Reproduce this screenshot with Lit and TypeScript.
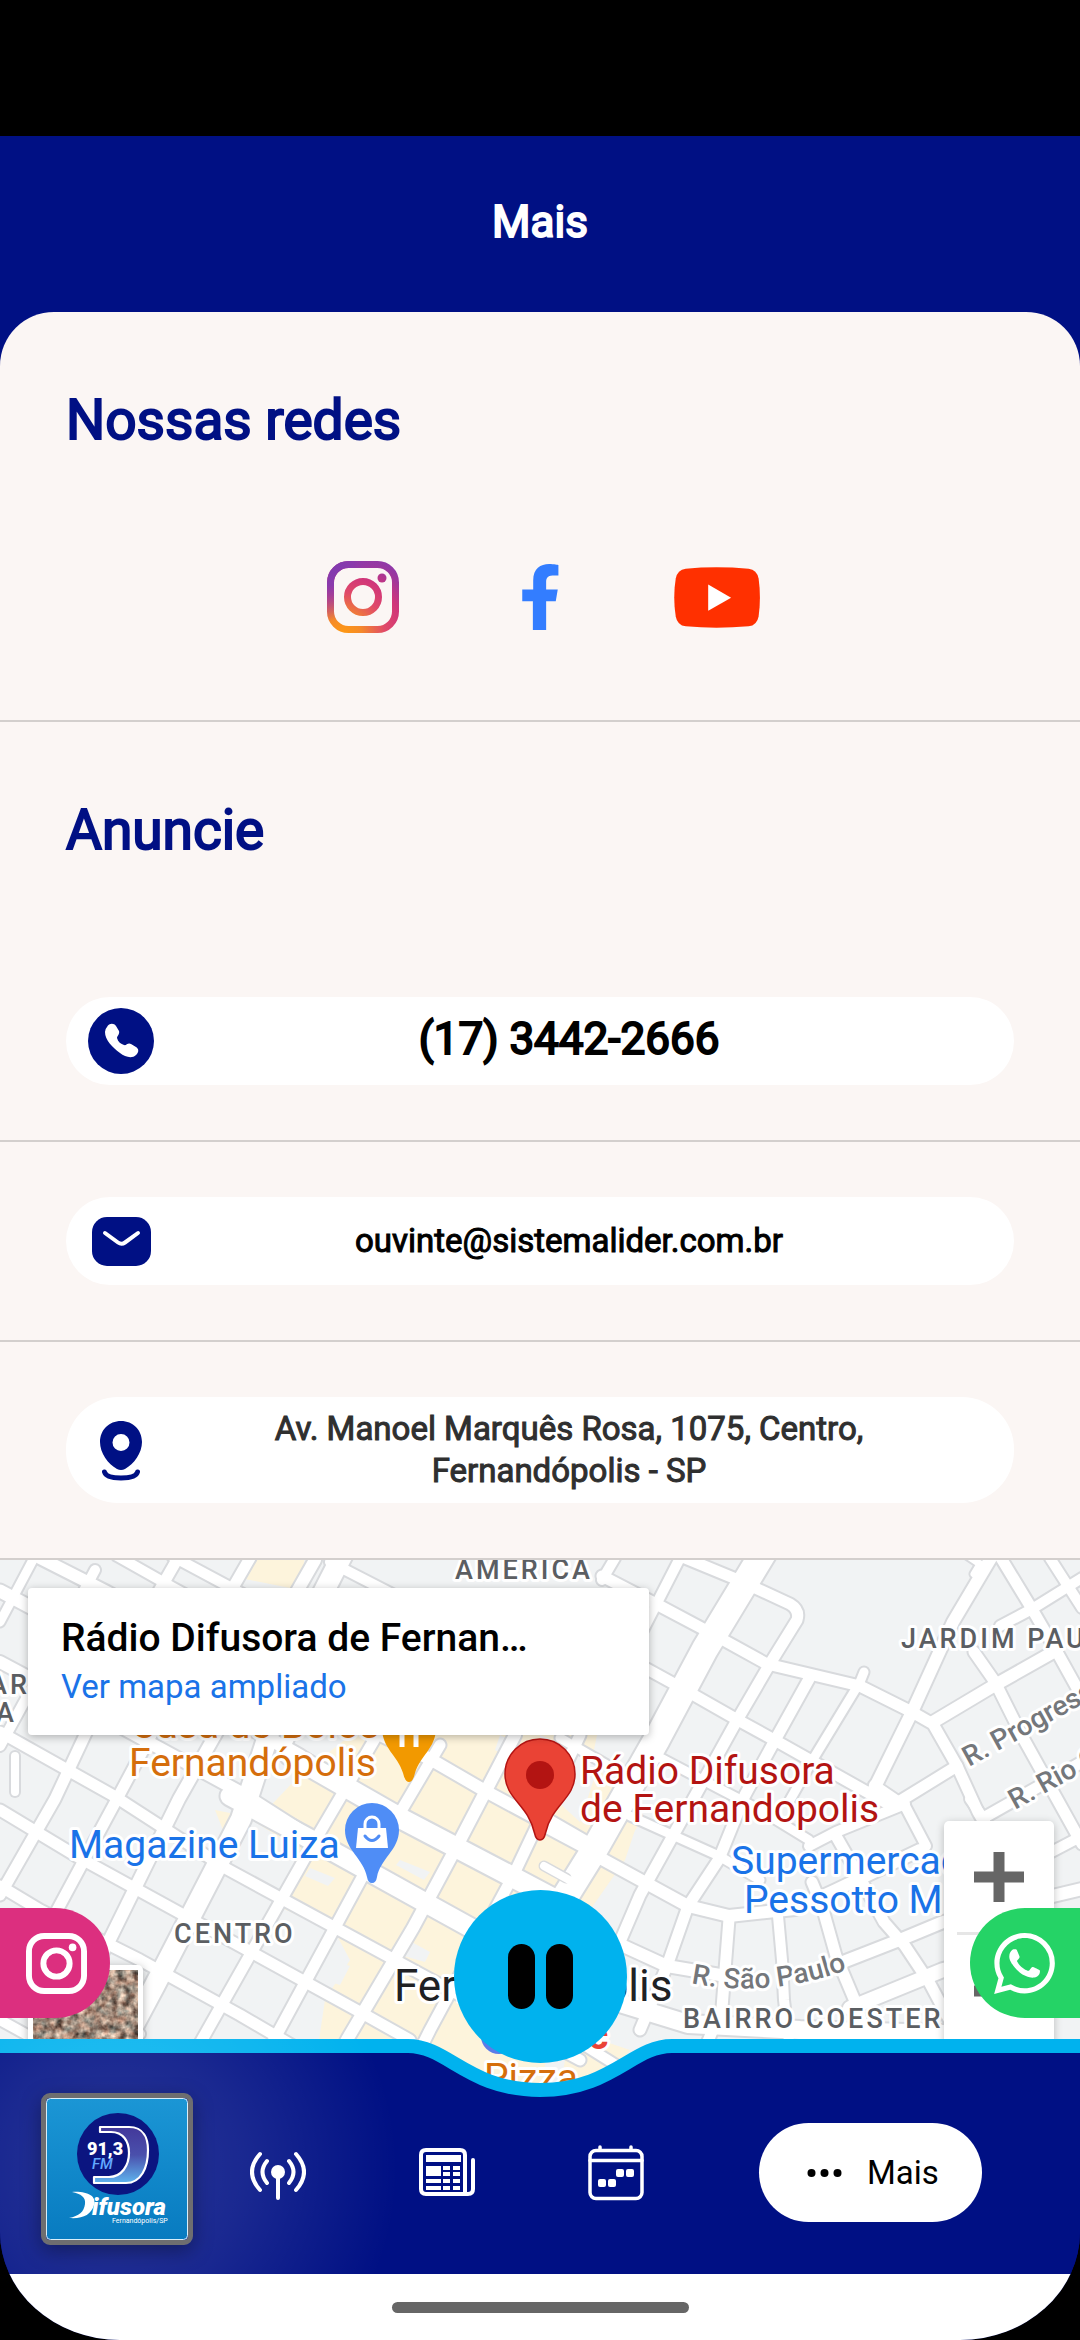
import { LitElement, html, svg, css, nothing } from "lit";
import { customElement } from "lit/decorators.js";

const WHATSAPP =
  "M17.472 14.382c-.297-.149-1.758-.867-2.03-.967-.273-.099-.471-.148-.67.15-.197.297-.767.966-.94 1.164-.173.199-.347.223-.644.075-.297-.15-1.255-.463-2.39-1.475-.883-.788-1.48-1.761-1.653-2.059-.173-.297-.018-.458.13-.606.134-.133.298-.347.446-.52.149-.174.198-.298.298-.497.099-.198.05-.371-.025-.52-.075-.149-.669-1.612-.916-2.207-.242-.579-.487-.5-.669-.51-.173-.008-.371-.01-.57-.01-.198 0-.52.074-.792.372-.272.297-1.04 1.016-1.04 2.479 0 1.462 1.065 2.875 1.213 3.074.149.198 2.096 3.2 5.077 4.487.709.306 1.262.489 1.694.625.712.227 1.36.195 1.871.118.571-.085 1.758-.719 2.006-1.413.248-.694.248-1.289.173-1.413-.074-.124-.272-.198-.57-.347m-5.421 7.403h-.004a9.87 9.87 0 01-5.031-1.378l-.361-.214-3.741.982.998-3.648-.235-.374a9.86 9.86 0 01-1.51-5.26c.001-5.45 4.436-9.884 9.888-9.884 2.64 0 5.122 1.03 6.988 2.898a9.825 9.825 0 012.893 6.994c-.003 5.45-4.437 9.884-9.885 9.884m8.413-18.297A11.815 11.815 0 0012.05 0C5.495 0 .16 5.335.157 11.892c0 2.096.547 4.142 1.588 5.945L.057 24l6.305-1.654a11.882 11.882 0 005.683 1.448h.005c6.554 0 11.89-5.335 11.893-11.893a11.821 11.821 0 00-3.48-8.413z";

/** Streets of the town centre: [path, width]. */
const STREETS: [string, number][] = [
  // north-west to south-east
  ["M117 -4L172 27L232 60L300 96", 10],
  ["M172 -4L241 33L320 76", 10],
  ["M330 2L400 38", 10],
  ["M40 -2L107 32L200 84L300 136L430 199L487 232L593 289", 12],
  ["M0 31L130 100L300 196L400 262", 13],
  ["M0 102L60 134L240 232L334 292", 12],
  ["M0 172L114 236L227 309L393 399L520 468L580 500", 11],
  ["M0 250L78 297L200 364L360 452L410 480", 11],
  ["M0 326L40 350L140 400L240 455L300 490", 11],
  ["M0 398L60 430L140 474", 10],
  ["M0 460L40 482", 10],
  ["M560 178L640 224", 9],
  ["M545 256L590 282", 8],
  ["M602 299L688 346L729 356L795 349L836 330L920 290", 12],
  ["M540 265L600 297", 9],
  ["M619 384L667 406L726 416", 12],
  ["M560 470L640 520", 10],
  // south-west to north-east
  ["M35 -4L0 62", 9],
  ["M95 10L45 104L0 186", 10],
  ["M178 -2L124 92L55 239L0 335", 11],
  ["M250 -2L190 102L117 239L40 382L0 450", 11],
  ["M315 0L235 140L179 239L110 379L50 490", 12],
  ["M360 40L310 136L281 195", 10],
  ["M380 170L310 289L203 478L180 520", 11],
  ["M440 185L365 312L275 478L250 520", 11],
  ["M515 175L457 286L413 368L348 478L325 520", 12],
  ["M580 175L513 316L430 470L400 530", 11],
  ["M681 -4L640 76", 10],
  ["M615 -2L602 20", 10],
  ["M685 -2L736 19L790 44Q800 50 797 60L771 102L736 162L695 236L640 335L619 384L590 440", 11],
  ["M809 119L774 182L745 235L719 299L688 346L667 406L640 470", 11],
  ["M864 112L860 122L815 196L790 240", 9],
  ["M991 -2L953 62L912 152L874 229", 12],
  ["M602 16L660 46L709 72L767 104L860 126L912 152L933 164L957 206L978 252L1000 290", 11],
  ["M647 109L678 126L736 159L778 182L874 236L892 246L957 206", 11],
  ["M874 225L905 246L926 286", 10],
  ["M809 286L836 272L905 244", 10],
  ["M630 256L719 296L760 320", 9],
  ["M655 195L760 250L809 280", 9],
  ["M1001 -2L1032 49L1057 92L1082 137", 11],
  ["M1050 -2L1082 48", 10],
  ["M1082 18L1032 49L1000 66", 10],
  ["M974 92L995 122L1022 176L1057 239L1082 284", 11],
  ["M933 162L995 125L1057 90", 12],
  ["M968 -4L980 4L974 14", 7],
  ["M985 257L1082 202", 11],
  ["M1082 276L1040 298", 10],
  ["M729 359L725 410L722 448L700 500", 11],
  ["M778 356L782 400L784 440L790 490", 10],
  ["M812 322L822 346L836 396L857 446L870 490", 11],
  ["M836 276L860 318L884 362L905 386L929 422L960 480", 11],
  ["M843 402L902 379L943 362L1082 329", 12],
  ["M970 239L984 259L1000 300", 10],
  ["M15 196V232", 8],
];

const AVENUES: [string, number][] = [
  ["M345 -10L300 78L241 259L155 425L115 500", 20],
  ["M765 -10L705 89L657 179L593 292L560 345", 26],
  ["M290 195L400 258L503 312L560 342", 20],
  ["M230 236L334 292L424 342L500 384", 19],
  ["M610 440L688 464L800 470L943 474", 18],
  ["M850 448L943 410L1082 378", 14],
];

interface Label {
  x: number;
  y: number;
  text: string;
  kind: string;
  turn?: number;
}

const LABELS: Label[] = [
  { x: 455, y: 19, text: "AMÉRICA", kind: "area" },
  { x: 901, y: 88, text: "JARDIM PAU", kind: "area" },
  { x: -11, y: 134, text: "AR", kind: "area" },
  { x: -4, y: 162, text: "A", kind: "area" },
  { x: 174, y: 383, text: "CENTRO", kind: "area" },
  { x: 683, y: 468, text: "BAIRRO COESTER", kind: "area" },
  { x: 969, y: 207, text: "R. Progress", kind: "street", turn: -29 },
  { x: 1015, y: 250, text: "R. Rio G", kind: "street", turn: -29 },
  { x: 131, y: 178, text: "Casa de Bolos", kind: "poi food" },
  { x: 129, y: 216, text: "Fernandópolis", kind: "poi food" },
  { x: 484, y: 531, text: "Pizza", kind: "poi food" },
  { x: 580, y: 224, text: "Rádio Difusora", kind: "poi place" },
  { x: 580, y: 262, text: "de Fernandopolis", kind: "poi place" },
  { x: 69, y: 298, text: "Magazine Luiza", kind: "poi shop" },
  { x: 731, y: 314, text: "Supermercad", kind: "poi shop" },
  { x: 744, y: 353, text: "Pessotto M", kind: "poi shop" },
  { x: 394, y: 441, text: "Fernandópolis", kind: "city" },
  { x: 588, y: 489, text: "c", kind: "poi station" },
];

@customElement("town-map")
export class TownMap extends LitElement {
  static styles = css`
    :host { display: block; position: relative; overflow: hidden; background: #f1f3f4; }
    .canvas { position: absolute; inset: 0; width: 100%; height: 100%; }
    .casing { fill: none; stroke: #d8dadd; stroke-linecap: round; stroke-linejoin: round; }
    .road { fill: none; stroke: #fff; stroke-linecap: round; stroke-linejoin: round; }
    text { font-family: Roboto, sans-serif; paint-order: stroke; stroke: #fff; stroke-width: 6px; stroke-linejoin: round; }
    .area { font-size: 27px; font-weight: 500; letter-spacing: 3px; fill: #5b5e62; }
    .street { font-size: 28px; font-weight: 500; fill: #74777b; }
    .poi { font-size: 39px; }
    .food { fill: #d56e0c; }
    .place { fill: #b31412; }
    .shop { fill: #1a73e8; }
    .city { font-size: 44px; fill: #202124; }
    .station { font-weight: 700; fill: #ea4335; }
    .card {
      position: absolute; left: 28px; top: 28px; width: 621px; box-sizing: border-box;
      padding: 26px 33px 24px; background: #fff; border-radius: 4px;
      box-shadow: 0 2px 8px rgba(0, 0, 0, 0.28);
    }
    .name { margin: 0; font-size: 39px; line-height: 48px; font-weight: 500; color: #000; }
    .larger { display: block; font-size: 33px; line-height: 49px; color: #1a73e8; text-decoration: none; }
    .zoom {
      position: absolute; right: 26px; top: 261px; width: 110px;
      display: flex; flex-direction: column; background: #fff; border-radius: 5px;
      box-shadow: 0 2px 8px rgba(0, 0, 0, 0.24);
    }
    .step { height: 111px; padding: 0; border: 0; background: none; display: grid; place-items: center; }
    .rule { height: 3px; margin: 0 13px; background: #e6e6e6; }
    .satellite {
      position: absolute; left: 28px; top: 405px; width: 115px; height: 115px; padding: 0;
      border: 5px solid #fff; border-radius: 5px; box-shadow: 0 2px 10px rgba(0, 0, 0, 0.3);
      box-sizing: border-box; background: #a39388; overflow: hidden;
    }
    .satellite svg { display: block; width: 100%; height: 100%; }
  `;

  render() {
    const roads = [...STREETS, ...AVENUES];
    return html`
      <svg class="canvas" viewBox="0 0 1080 530" preserveAspectRatio="xMidYMin slice" role="img" aria-label="Mapa de Fernandópolis">
        <defs><path id="saopaulo" d="M691 423Q770 439 852 408" /></defs>
        <path fill="#fdf4dc" d="M245 -4L305 -4L300 30L240 18ZM255 262L300 215L370 160H600L592 200L640 262L560 400L540 540H310L325 440L350 400L335 372L275 345L300 290ZM215 250L240 255L225 275Z" />
        <path fill="#fdf4dc" d="M590 290L640 255L625 300L590 350ZM570 470L630 490L600 530H560Z" />
        <path fill="#f1f3f4" d="M500 175L530 190L520 204L495 190ZM540 175L600 200L580 262L545 230ZM310 308L335 318L328 326L305 316ZM425 352L445 348L440 360ZM408 380L430 392L425 402L400 395ZM325 398L350 406L340 425L318 418ZM400 300L430 312L424 320L396 305Z" />
        ${roads.map(([d, w]) => svg`<path class="casing" d=${d} stroke-width=${w + 4}></path>`)}
        ${roads.map(([d, w]) => svg`<path class="road" d=${d} stroke-width=${w}></path>`)}
        <path class="casing" d="M544 306L566 318" stroke-width="11" />
        <path class="road" d="M544 306L580 326" stroke-width="8" />
        <circle cx="499" cy="476" r="18" fill="#5b7be8" />
        ${LABELS.map(
          (l) => svg`<text class=${l.kind} x=${l.x} y=${l.y} transform=${`rotate(${l.turn ?? 0} ${l.x} ${l.y})`}>${l.text}</text>`,
        )}
        <text class="street"><textPath href="#saopaulo">R. São Paulo</textPath></text>

        <path fill="#f29900" d="M409 222Q405 222 403 213C398 196 382 188 382 168A27 27 0 0 1 436 168C436 188 420 196 415 213Q413 222 409 222Z" />
        <path stroke="#fff" stroke-width="5" d="M402 165V187M416 165V187" />

        <path fill="#4f8df6" d="M372 323Q368 323 367 317C364 299 345 290 345 270A27 27 0 0 1 399 270C399 290 380 299 377 317Q376 323 372 323Z" />
        <path fill="#fff" d="M358 268H386L388 288H356Z" />
        <path fill="none" stroke="#fff" stroke-width="3" d="M365 269V264A7 7 0 0 1 379 264V269" />
        <path fill="none" stroke="#4f8df6" stroke-width="3" stroke-linecap="round" d="M365 276Q372 285 379 276" />

        <path fill="#ea4335" stroke="#b31412" stroke-width="1.5" d="M540 280Q536 280 534.500 273C528 244 505 239 505 214A35 35 0 0 1 575 214C575 239 552 244 545.500 273Q544 280 540 280Z" />
        <circle cx="540" cy="215" r="14" fill="#b31412" />
      </svg>

      <div class="card">
        <h3 class="name">Rádio Difusora de Fernan…</h3>
        <a class="larger" href="#mapa">Ver mapa ampliado</a>
      </div>

      <div class="zoom">
        <button class="step" aria-label="Aumentar o zoom">
          <svg width="50" height="50" viewBox="0 0 50 50"><path stroke="#666" stroke-width="11" d="M0 25H50M25 0V50" /></svg>
        </button>
        <div class="rule"></div>
        <button class="step" aria-label="Diminuir o zoom">
          <svg width="50" height="50" viewBox="0 0 50 50"><path stroke="#666" stroke-width="11" d="M0 25H50" /></svg>
        </button>
      </div>

      <button class="satellite" aria-label="Imagens de satélite">
        <svg viewBox="0 0 105 105">
          <filter id="ground" x="0" y="0" width="100%" height="100%" color-interpolation-filters="sRGB">
            <feTurbulence type="fractalNoise" baseFrequency="0.13" numOctaves="3" seed="5" />
            <feColorMatrix values="0.9 0.5 0 0 -0.07  0.7 0.65 0 0 -0.13  0.6 0.65 0 0 -0.14  0 0 0 0 1" />
          </filter>
          <rect width="105" height="105" filter="url(#ground)" />
        </svg>
      </button>
    `;
  }
}

@customElement("app-root")
export class AppRoot extends LitElement {
  static styles = css`
    :host { display: block; background: #000; font-family: Roboto, "Noto Sans", sans-serif; }
    * { box-sizing: border-box; }
    a { color: inherit; text-decoration: none; }
    button { font: inherit; color: inherit; border: 0; padding: 0; }
    svg { display: block; }

    .device { min-height: 100vh; display: flex; flex-direction: column; padding-top: 136px; }
    .screen {
      position: relative; flex: 1; display: flex; flex-direction: column; overflow: hidden;
      background: #001084; border-radius: 0 0 120px 120px / 0 0 108px 108px;
    }
    .header { height: 176px; padding-bottom: 4px; display: grid; place-items: center; }
    .strong { font-weight: 400; -webkit-text-stroke: 1px currentColor; }
    .wide { -webkit-text-stroke-width: 2px; }
    .title { margin: 0; font-size: 44px; line-height: 52px; color: #fff; }

    .content {
      flex: 1; display: flex; flex-direction: column; overflow: hidden;
      background: #fbf6f4; border-radius: 54px 54px 0 0;
    }
    .section { border-bottom: 2px solid #d3cfcd; padding: 76px 66px 55px; }
    .row { border-bottom: 2px solid #d3cfcd; padding: 55px 66px; }
    .heading { margin: 0; font-size: 55px; line-height: 64px; color: #001084; }
    .socials {
      display: grid; grid-template-columns: repeat(3, 177px); justify-content: center;
      padding: 109px 0 32px;
    }
    .social { height: 72px; display: grid; place-items: center; }

    .pill {
      display: grid; grid-template-columns: 66px 1fr; align-items: center; min-height: 88px;
      padding: 11px 30px 11px 22px; background: #fff; border-radius: 52px; color: #000;
      text-align: center;
    }
    .first { margin-top: 135px; }
    .glyph { display: grid; place-items: center; }
    .phone { font-size: 44px; line-height: 52px; padding-bottom: 4px; }
    .small { font-size: 33px; line-height: 42px; }
    .address { color: #2f2f2f; padding-inline: 60px; }

    .map { flex: 1; min-height: 400px; }

    .nav { position: relative; height: 235px; margin-top: -48px; color: #fff; }
    .shape {
      position: absolute; inset: 0; display: grid; grid-template-columns: 1fr 320px 1fr;
    }
    .side { background: #001084; border-top: 14px solid #00b2ee; }
    .glow {
      position: absolute; inset: 0;
      background: radial-gradient(circle 280px at 118px 130px, rgba(255, 255, 255, 0.16), rgba(255, 255, 255, 0.1) 45%, rgba(255, 255, 255, 0));
    }
    .tabs {
      position: relative; display: grid; grid-template-columns: 152px 1fr 1fr 1fr 281px;
      padding: 54px 98px 0 41px; height: 213px; align-items: center;
    }
    .brand {
      align-self: start; width: 152px; height: 152px; border: 5px solid #6e6e70;
      border-radius: 9px; overflow: hidden; box-shadow: 0 6px 20px rgba(0, 0, 0, 0.35);
    }
    .tab { display: grid; place-items: center; }
    .current {
      justify-self: end; display: flex; align-items: center; gap: 25px; width: 223px; height: 99px;
      padding-left: 48px; border-radius: 50px; background: #fff; color: #000; font-size: 33px; line-height: 40px;
    }

    .play {
      position: absolute; left: calc(50% - 86px); bottom: 277px; width: 173px; height: 173px;
      border-radius: 50%; background: #00b2ee; display: flex; justify-content: center; align-items: center; gap: 11px;
    }
    .bar { width: 27px; height: 65px; border-radius: 14px; background: #000; }
    .side-link { position: absolute; bottom: 322px; width: 110px; height: 110px; display: flex; align-items: center; }
    .insta { left: 0; border-radius: 0 55px 55px 0; background: #dc2f7f; padding-left: 26px; }
    .whats { right: 0; border-radius: 55px 0 0 55px; background: #25d366; padding-left: 24px; }

    .system { height: 66px; background: #fff; display: grid; place-items: center; }
    .gesture { width: 297px; height: 11px; border-radius: 6px; background: #666; }

    .logo-num { font: 900 18px Roboto, sans-serif; fill: #fff; }
    .logo-fm { font: italic 500 15px Roboto, sans-serif; fill: #62a8ff; }
    .logo-name { font: italic 900 24px Roboto, sans-serif; fill: #fff; }
    .logo-city { font: 400 7px Roboto, sans-serif; fill: #fff; }
  `;

  private instagram(size: number, color?: string) {
    const stroke = color ?? "url(#ig)";
    return html`<svg width=${size} height=${size} viewBox="0 0 72 72" fill="none" stroke=${stroke} stroke-width="7">
      <defs>
        <radialGradient id="ig" gradientUnits="userSpaceOnUse" cx="16" cy="74" r="84">
          <stop offset="0" stop-color="#ff9a10" /><stop offset="0.22" stop-color="#f58a2a" />
          <stop offset="0.5" stop-color="#e04a68" /><stop offset="0.72" stop-color="#d0357a" />
          <stop offset="0.9" stop-color="#a0379a" /><stop offset="1" stop-color="#8f38a8" />
        </radialGradient>
        <radialGradient id="ig-top" gradientUnits="userSpaceOnUse" cx="2" cy="0" r="60">
          <stop offset="0" stop-color="#7f3bb0" /><stop offset="0.4" stop-color="#8a3aac" />
          <stop offset="1" stop-color="#8f38a8" stop-opacity="0" />
        </radialGradient>
      </defs>
      <rect x="3.500" y="3.500" width="65" height="65" rx="18" />
      ${color ? nothing : svg`<rect x="3.500" y="3.500" width="65" height="65" rx="18" stroke="url(#ig-top)"></rect>`}
      <circle cx="36" cy="36" r="15.500" />
      <circle cx="55" cy="17" r="4.500" fill=${stroke} stroke="none" />
    </svg>`;
  }

  private logo() {
    return html`<svg width="142" height="142" viewBox="5 5 142 142">
      <defs>
        <linearGradient id="sky" x2="0" y2="1"><stop stop-color="#1b96d5" /><stop offset="1" stop-color="#087bc0" /></linearGradient>
        <linearGradient id="dee" x2="0" y2="1">
          <stop stop-color="#43389a" /><stop offset="0.5" stop-color="#4a50ac" /><stop offset="1" stop-color="#5fb4ee" />
        </linearGradient>
      </defs>
      <rect x="5.500" y="5.500" width="141" height="141" rx="4" fill="url(#sky)" stroke="#d8eefa" />
      <circle cx="77" cy="61" r="41" fill="#0b1580" />
      <path fill="url(#dee)" stroke="#fff" stroke-width="2.200" stroke-linejoin="round"
        d="M59 34H88C103 34 107 46 107 57C107 75 100 90 85 90H53V84H68C81 84 88 72 88 60C88 48 82 39 70 39H59Z" />
      <text class="logo-num" x="46" y="62">91,3</text>
      <text class="logo-fm" x="51" y="76">FM</text>
      <path fill="#fff" d="M31 99C46 98 56 103 53 112C50 122 42 126 28 125C38 123 43 119 44 111C45 104 40 101 31 99Z" />
      <text class="logo-name" x="51" y="122">ifusora</text>
      <text class="logo-city" x="71" y="130">Fernandópolis/SP</text>
    </svg>`;
  }

  render() {
    return html`
      <div class="device">
        <div class="screen">
          <header class="header"><h1 class="title strong wide">Mais</h1></header>

          <main class="content">
            <section class="section">
              <h2 class="heading strong wide">Nossas redes</h2>
              <div class="socials">
                <a class="social" href="#instagram" aria-label="Instagram">${this.instagram(72)}</a>
                <a class="social" href="#facebook" aria-label="Facebook">
                  <svg width="37" height="66" viewBox="667 101 110 199"><path fill="#337dff"
                    d="M667 178H700V150C700 115 722 101 748 101C762 101 776 104 776 104V136H758C743 136 739 146 739 155V178H774L768 213H739V300H699V213H667Z" /></svg>
                </a>
                <a class="social" href="#youtube" aria-label="YouTube">
                  <svg width="86" height="61" viewBox="1124 113 259 184">
                    <path fill="#ff3000" d="M1159 118Q1250 109 1349 118Q1374 121 1379 148Q1387 205 1379 262Q1374 289 1349 292Q1250 301 1159 292Q1134 289 1129 262Q1120 205 1129 148Q1134 121 1159 118Z" />
                    <path fill="#fff" d="M1227 166L1296 206L1227 245Z" />
                  </svg>
                </a>
              </div>
            </section>

            <section class="section">
              <h2 class="heading strong wide">Anuncie</h2>
              <a class="pill first" href="tel:+551734422666">
                <span class="glyph">
                  <svg width="66" height="66" viewBox="0 0 66 66">
                    <circle cx="33" cy="33" r="33" fill="#001084" />
                    <path fill="#fff" d="M19 19C21 15 26 15 28 18L31 23C32 26 29 28 29 30C30 34 33 36 36 37C38 38 40 34 43 36L48 39C51 41 51 44 48 47C44 51 37 49 32 45C24 39 17 32 17 24Q17 21 19 19Z" />
                  </svg>
                </span>
                <span class="phone strong wide">(17) 3442-2666</span>
              </a>
            </section>

            <div class="row">
              <a class="pill" href="mailto:ouvinte@sistemalider.com.br">
                <span class="glyph">
                  <svg width="59" height="49" viewBox="0 0 59 49">
                    <rect width="59" height="49" rx="15" fill="#001084" />
                    <path fill="none" stroke="#fff" stroke-width="4" stroke-linecap="round" d="M13 16L26 25.500Q29.500 28 33 25.500L46 16" />
                  </svg>
                </span>
                <span class="small strong">ouvinte@sistemalider.com.br</span>
              </a>
            </div>

            <div class="row">
              <a class="pill" href="#endereco">
                <span class="glyph">
                  <svg width="66" height="66" viewBox="0 0 66 66">
                    <path fill="#001084" fill-rule="evenodd" d="M33 4C45 4 54 13 54 25C54 36 46 47 37 52Q33 54 29 52C20 47 12 36 12 25C12 13 21 4 33 4ZM33 17A8.500 8.500 0 0 0 33 34A8.500 8.500 0 0 0 33 17Z" />
                    <path fill="none" stroke="#001084" stroke-width="5" stroke-linecap="round" d="M16.500 55Q18 61 33 61Q48 61 49.500 55" />
                  </svg>
                </span>
                <span class="small strong address">Av. Manoel Marquês Rosa, 1075, Centro, Fernandópolis - SP</span>
              </a>
            </div>

            <town-map class="map"></town-map>
          </main>

          <nav class="nav">
            <div class="shape">
              <div class="side"></div>
              <svg width="320" height="235" viewBox="0 0 320 235">
                <path fill="#001084" d="M0 7H28C68 7 88 51 160 51C232 51 252 7 292 7H320V235H0Z" />
                <path fill="none" stroke="#00b2ee" stroke-width="14" d="M0 7H28C68 7 88 51 160 51C232 51 252 7 292 7H320" />
              </svg>
              <div class="side"></div>
            </div>
            <div class="glow"></div>
            <div class="tabs">
              <a class="brand" href="#inicio" aria-label="Difusora 91,3 FM">${this.logo()}</a>
              <a class="tab" href="#ao-vivo" aria-label="Ao vivo">
                <svg width="56" height="56" viewBox="0 -7 56 56" fill="none" stroke="#fff" stroke-width="4" stroke-linecap="round">
                  <circle cx="28" cy="20" r="7" fill="#fff" stroke="none" />
                  <path d="M28 22V46M17 9Q8 20 17 31M39 9Q48 20 39 31M10 2Q-6 20 10 38M46 2Q62 20 46 38" />
                </svg>
              </a>
              <a class="tab" href="#noticias" aria-label="Notícias">
                <svg width="56" height="50" viewBox="0 0 56 50">
                  <path fill="none" stroke="#fff" stroke-width="4" stroke-linecap="round" d="M7 2H41Q46 2 46 7V46H7Q2 46 2 41V7Q2 2 7 2ZM54 12V41Q54 46 49 46H44" />
                  <path fill="#fff" d="M7 7H42V14H7ZM7 18H22V28H7ZM7 31H22V35H7ZM7 38H22V42H7ZM24 18H31V22H24ZM24 24H31V28H24ZM24 31H31V35H24ZM24 38H31V42H24ZM34 18H41V22H34ZM34 24H41V28H34ZM34 31H41V35H34ZM34 38H41V42H34Z" />
                </svg>
              </a>
              <a class="tab" href="#programacao" aria-label="Programação">
                <svg width="56" height="56" viewBox="0 0 56 56">
                  <rect x="2" y="5.500" width="52" height="48" rx="6" fill="none" stroke="#fff" stroke-width="3.500" />
                  <path stroke="#fff" stroke-width="3.500" stroke-linecap="round" d="M2 15.500H54M12 2V5M43 2V5" />
                  <g fill="#fff">
                    <rect x="10" y="34" width="8" height="8" rx="2" /><rect x="20" y="34" width="8" height="8" rx="2" />
                    <rect x="28" y="24" width="8" height="8" rx="2" /><rect x="38" y="24" width="8" height="8" rx="2" />
                  </g>
                </svg>
              </a>
              <a class="current" href="#mais" aria-current="page">
                <svg width="35" height="10" viewBox="0 0 35 10"><circle cx="4.500" cy="5" r="4" /><circle cx="17.500" cy="5" r="4" /><circle cx="30.500" cy="5" r="4" /></svg>
                Mais
              </a>
            </div>
          </nav>

          <a class="side-link insta" href="#instagram" aria-label="Instagram">${this.instagram(61, "#fff")}</a>
          <a class="side-link whats" href="#whatsapp" aria-label="WhatsApp">
            <svg width="61" height="61" viewBox="0 0 24 24" fill="#fff"><path d=${WHATSAPP} /></svg>
          </a>
          <button class="play" aria-label="Pausar"><span class="bar"></span><span class="bar"></span></button>
          <div class="system"><div class="gesture"></div></div>
        </div>
      </div>
    `;
  }
}
